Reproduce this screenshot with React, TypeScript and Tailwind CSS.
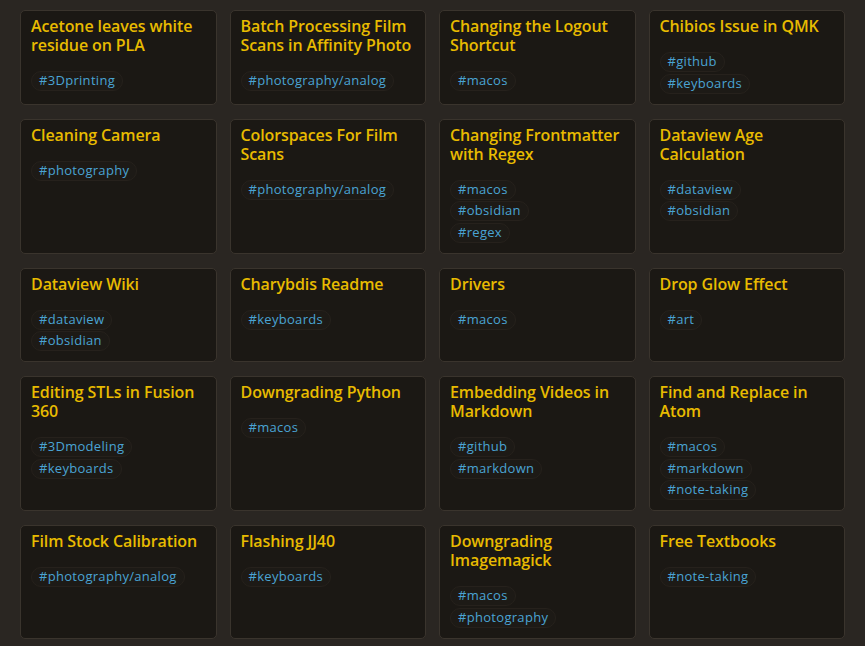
import React from "react";

const cards: { title: string; tags: string[] }[] = [
  { title: "Acetone leaves white residue on PLA", tags: ["#3Dprinting"] },
  { title: "Batch Processing Film Scans in Affinity Photo", tags: ["#photography/analog"] },
  { title: "Changing the Logout Shortcut", tags: ["#macos"] },
  { title: "Chibios Issue in QMK", tags: ["#github", "#keyboards"] },
  { title: "Cleaning Camera", tags: ["#photography"] },
  { title: "Colorspaces For Film Scans", tags: ["#photography/analog"] },
  { title: "Changing Frontmatter with Regex", tags: ["#macos", "#obsidian", "#regex"] },
  { title: "Dataview Age Calculation", tags: ["#dataview", "#obsidian"] },
  { title: "Dataview Wiki", tags: ["#dataview", "#obsidian"] },
  { title: "Charybdis Readme", tags: ["#keyboards"] },
  { title: "Drivers", tags: ["#macos"] },
  { title: "Drop Glow Effect", tags: ["#art"] },
  { title: "Editing STLs in Fusion 360", tags: ["#3Dmodeling", "#keyboards"] },
  { title: "Downgrading Python", tags: ["#macos"] },
  { title: "Embedding Videos in Markdown", tags: ["#github", "#markdown"] },
  { title: "Find and Replace in Atom", tags: ["#macos", "#markdown", "#note-taking"] },
  { title: "Film Stock Calibration", tags: ["#photography/analog"] },
  { title: "Flashing JJ40", tags: ["#keyboards"] },
  { title: "Downgrading Imagemagick", tags: ["#macos", "#photography"] },
  { title: "Free Textbooks", tags: ["#note-taking"] },
];

export default function App() {
  return (
    <div
      className="min-h-[646px] bg-[#2a2622] px-[20px] pt-[10px] pb-[7px]"
      style={{ fontFamily: '"Open Sans", "Noto Sans", sans-serif' }}
    >
      <div className="grid grid-cols-4 gap-x-[13px] gap-y-[14px]">
        {cards.map((c) => (
          <div
            key={c.title}
            className="flex flex-col rounded-[5px] border border-[#3a342d] bg-[#1b1814] pl-[10px] pr-[6px] pt-[6px] pb-[10px]"
          >
            <div className="text-[16px] font-semibold leading-[19px] tracking-[-0.1px] text-[#e8bb00]">
              {c.title}
            </div>
            <div className="mt-[16px] flex flex-col items-start gap-[1.5px]">
              {c.tags.map((t) => (
                <span
                  key={t}
                  className="flex h-[20px] items-center rounded-full border border-[#26211c] bg-[#1d1a16] px-[7px] text-[13px] font-medium tracking-[0.3px] text-[#4aa4d4]"
                >
                  {t}
                </span>
              ))}
            </div>
          </div>
        ))}
      </div>
    </div>
  );
}
